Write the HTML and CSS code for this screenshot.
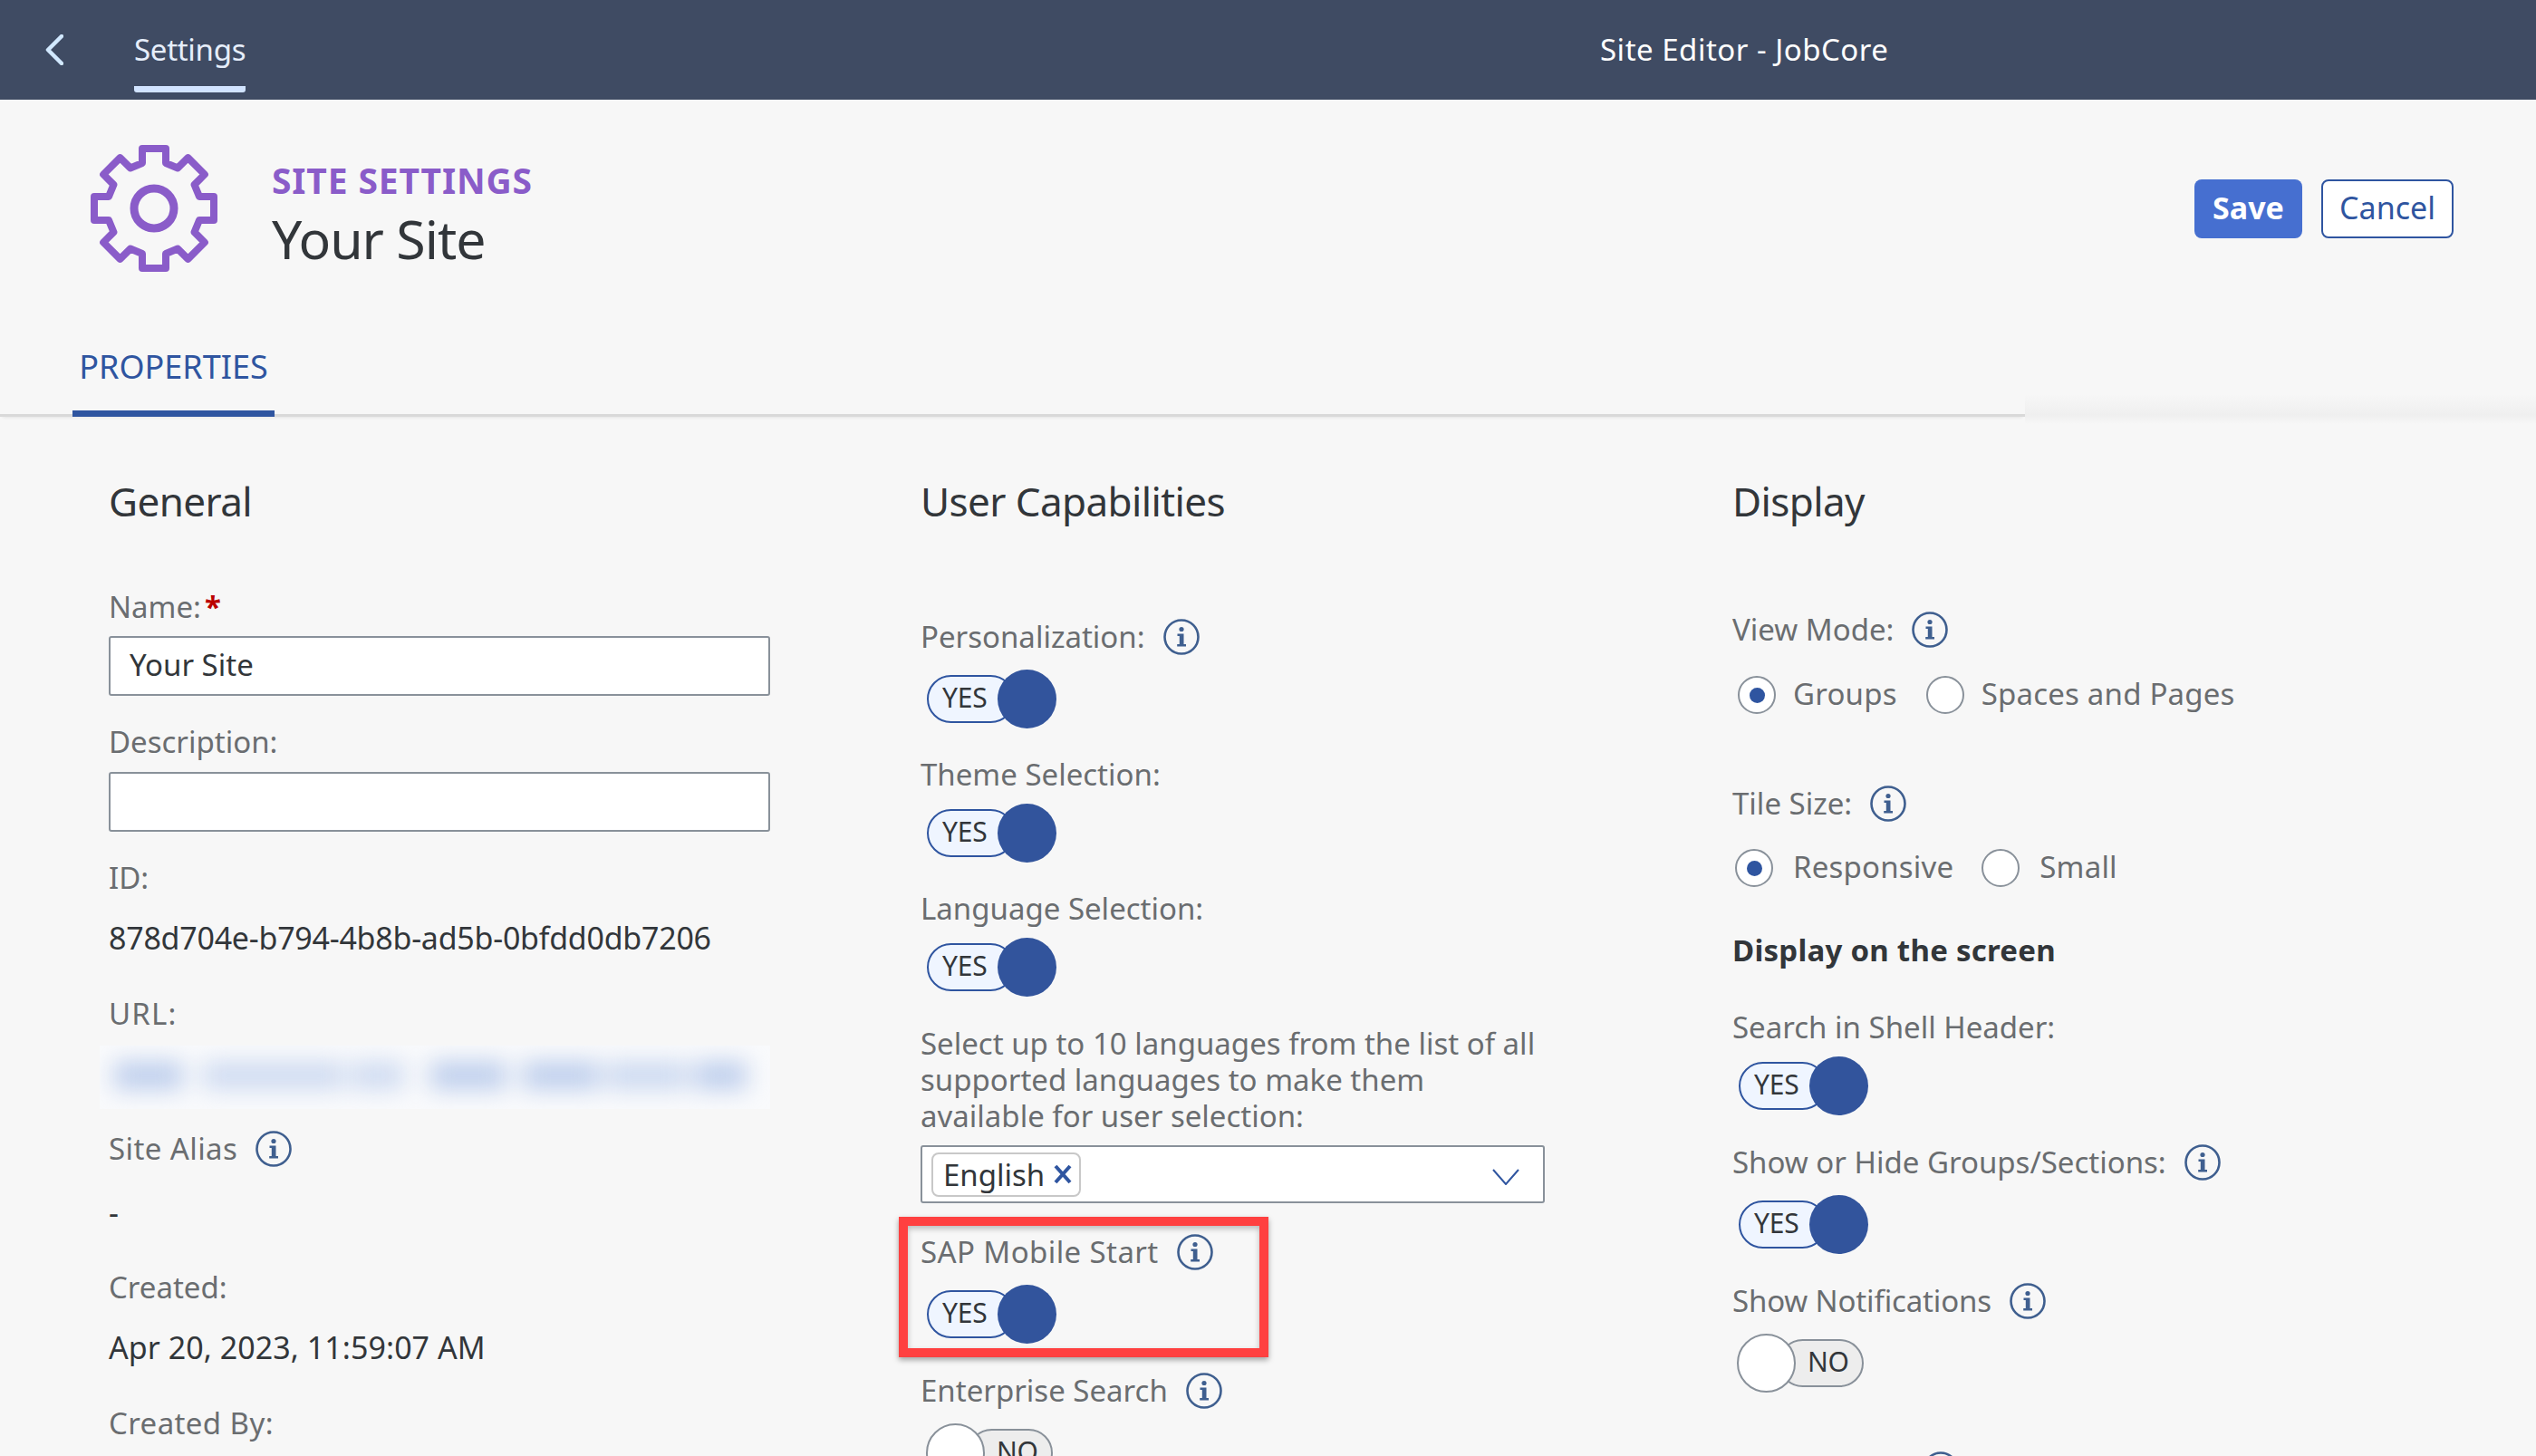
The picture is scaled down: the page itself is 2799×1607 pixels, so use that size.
FILE: index.html
```html
<!DOCTYPE html>
<html lang="en">
<head>
<meta charset="utf-8">
<title>Site Editor - JobCore</title>
<link rel="stylesheet" href="styles.css">
</head>
<body>
<svg class="defs" width="0" height="0" aria-hidden="true">
  <symbol id="info" viewBox="0 0 40 40">
    <circle cx="20" cy="20" r="18.5" fill="none" stroke="#3f5f8f" stroke-width="2.6"/>
    <circle cx="20" cy="11.5" r="2.6" fill="#3f5f8f"/>
    <path d="M15.5 16.5h7v11.5h2.5v2.6H15.2V28h2.6v-8.9h-2.3z" fill="#3f5f8f"/>
  </symbol>
</svg>

<header class="shell">
  <svg class="back" viewBox="0 0 20 34"><path d="M18 2 3 17l15 15" fill="none" stroke="#d1e8ff" stroke-width="4.5" stroke-linecap="round" stroke-linejoin="round"/></svg>
  <div class="shell-tab">Settings</div>
  <div class="shell-title">Site Editor - JobCore</div>
</header>

<section class="page-head">
  <svg class="gear" viewBox="-70 -70 140 140">
    <polygon points="-13,-50 -13,-66 13,-66 13,-50 26.16,-44.55 37.48,-55.86 55.86,-37.48 44.55,-26.16 50,-13 66,-13 66,13 50,13 44.55,26.16 55.86,37.48 37.48,55.86 26.16,44.55 13,50 13,66 -13,66 -13,50 -26.16,44.55 -37.48,55.86 -55.86,37.48 -44.55,26.16 -50,13 -66,13 -66,-13 -50,-13 -44.55,-26.16 -55.86,-37.48 -37.48,-55.86 -26.16,-44.55" fill="none" stroke="#8a5cc9" stroke-width="8" stroke-linejoin="round"/>
    <circle r="22" fill="none" stroke="#8a5cc9" stroke-width="9"/>
  </svg>
  <div class="head-text">
    <div class="eyebrow">SITE SETTINGS</div>
    <h1 class="site-name">Your Site</h1>
  </div>
  <div class="actions">
    <button class="btn btn-primary">Save</button>
    <button class="btn btn-ghost">Cancel</button>
  </div>
</section>

<nav class="tabs">
  <div class="tab-line"><div class="tab">PROPERTIES</div></div>
  <div class="tab-fade"></div>
</nav>

<main class="columns">
  <section class="col">
    <h2 class="col-title">General</h2>
    <div class="label m77">Name:<span class="req">*</span></div>
    <div class="input m12">Your Site</div>
    <div class="label m31">Description:</div>
    <div class="input m13"></div>
    <div class="label m31">ID:</div>
    <div class="value m26">878d704e-b794-4b8b-ad5b-0bfdd0db7206</div>
    <div class="label wider m44">URL:</div>
    <div class="blurred m15"><div class="blur-row"><i class="b1"></i><i class="b2"></i><i class="b3"></i><i class="b4"></i><i class="b5"></i><i class="b6"></i><i class="b7"></i></div></div>
    <div class="label wide m24">Site Alias<svg class="info"><use href="#info"/></svg></div>
    <div class="value m30">-</div>
    <div class="label m43">Created:</div>
    <div class="value date m26">Apr 20, 2023, 11:59:07 AM</div>
    <div class="label wide m44">Created By:</div>
  </section>

  <section class="col col-mid">
    <h2 class="col-title">User Capabilities</h2>
    <div class="label m110">Personalization:<svg class="info"><use href="#info"/></svg></div>
    <div class="toggle m16"><span class="track">YES</span><span class="knob"></span></div>
    <div class="label m31">Theme Selection:</div>
    <div class="toggle m12"><span class="track">YES</span><span class="knob"></span></div>
    <div class="label m31">Language Selection:</div>
    <div class="toggle m12"><span class="track">YES</span><span class="knob"></span></div>
    <p class="label hint m32">Select up to 10 languages from the list of all supported languages to make them available for user selection:</p>
    <div class="multi m12">
      <span class="token">English<svg class="token-x" viewBox="0 0 22 24"><path d="M3 3l16 18M19 3 3 21" fill="none" stroke="#2f55a0" stroke-width="4"/></svg></span>
      <svg class="caret" viewBox="0 0 30 18"><path d="M1 1l14 16L29 1" fill="none" stroke="#2f55a0" stroke-width="2"/></svg>
    </div>
    <div class="label wide m34">SAP Mobile Start<svg class="info"><use href="#info"/></svg></div>
    <div class="toggle m16"><span class="track">YES</span><span class="knob"></span></div>
    <div class="label m32">Enterprise Search<svg class="info"><use href="#info"/></svg></div>
    <div class="toggle off m16"><span class="knob"></span><span class="track">NO</span></div>
    <div class="highlight"></div>
  </section>

  <section class="col col-right">
    <h2 class="col-title">Display</h2>
    <div class="label m102">View Mode:<svg class="info"><use href="#info"/></svg></div>
    <div class="radios radios-a m31">
      <span class="radio on"></span><span class="radio-text">Groups</span>
      <span class="radio"></span><span class="radio-text">Spaces and Pages</span>
    </div>
    <div class="label m79">Tile Size:<svg class="info"><use href="#info"/></svg></div>
    <div class="radios radios-b m30">
      <span class="radio on"></span><span class="radio-text">Responsive</span>
      <span class="radio"></span><span class="radio-text">Small</span>
    </div>
    <div class="subhead m50">Display on the screen</div>
    <div class="label m45">Search in Shell Header:</div>
    <div class="toggle m12"><span class="track">YES</span><span class="knob"></span></div>
    <div class="label m32">Show or Hide Groups/Sections:<svg class="info"><use href="#info"/></svg></div>
    <div class="toggle m16"><span class="track">YES</span><span class="knob"></span></div>
    <div class="label tight m32">Show Notifications<svg class="info"><use href="#info"/></svg></div>
    <div class="toggle off m16"><span class="knob"></span><span class="track">NO</span></div>
    <div class="label m65 tail"><svg class="info"><use href="#info"/></svg></div>
  </section>
</main>
</body>
</html>
```

FILE: styles.css
```css
* { box-sizing: border-box; }
html, body { margin: 0; height: 100%; }
body {
  background: #f7f7f7;
  font-family: "Noto Sans", "Open Sans", sans-serif;
  font-size: 33px;
  color: #32363a;
  overflow: hidden;
}
.defs { position: absolute; }

.shell {
  height: 110px;
  background: #3f4b63;
  display: flex;
  align-items: stretch;
}
.back { width: 20px; height: 34px; margin: 38px 0 0 50px; }
.shell-tab {
  margin-left: 78px;
  width: 123px;
  height: 102px;
  line-height: 110px;
  font-size: 33px;
  letter-spacing: -.3px;
  color: #e6eefb;
  white-space: nowrap;
  border-bottom: 7px solid #d1e3ff;
  border-radius: 0 0 3px 3px;
}
.shell-title {
  margin-left: 1495px;
  line-height: 110px;
  font-size: 33px;
  letter-spacing: .5px;
  color: #fff;
  white-space: nowrap;
}

.page-head {
  height: 325px;
  padding: 50px 91px 0 100px;
  display: flex;
  align-items: flex-start;
}
.gear { width: 140px; height: 140px; flex: none; }
.head-text { margin-left: 60px; padding-top: 17px; }
.eyebrow {
  font-size: 39px;
  line-height: 44px;
  font-weight: 700;
  letter-spacing: .85px;
  color: #8a5cc9;
}
.site-name {
  margin: 6px 0 0;
  font-size: 59px;
  line-height: 72px;
  font-weight: 400;
  letter-spacing: -1px;
  color: #32363a;
}
.actions { margin: 38px 0 0 auto; display: flex; gap: 21px; }
.btn {
  height: 65px;
  border-radius: 8px;
  font: inherit;
  font-size: 34px;
  padding: 0 0 3px;
}
.btn-primary {
  width: 119px;
  border: 0;
  background: #466fd0;
  color: #fff;
  font-weight: 700;
}
.btn-ghost {
  width: 146px;
  border: 2px solid #2f55a0;
  background: #fff;
  color: #2f55a0;
}

.tabs { height: 25px; display: flex; margin-top: 0; }
.tab-line {
  width: 2235px;
  height: 25px;
  border-bottom: 3px solid #d9d9d9;
  box-shadow: 0 3px 4px -3px rgba(0,0,0,.12);
  position: relative;
}
.tab {
  position: absolute;
  left: 80px;
  bottom: -3px;
  width: 223px;
  height: 70px;
  text-align: center;
  line-height: 30px;
  font-size: 36px;
  color: #2f55a0;
  border-bottom: 7px solid #2f55a0;
  white-space: nowrap;
}
.tab-fade {
  flex: 1;
  height: 33px;
  background: linear-gradient(#f7f7f7, #efefef 70%, #f7f7f7);
}

.columns {
  padding: 73px 0 0 120px;
  display: grid;
  grid-template-columns: 896px 896px 1fr;
}
.col { position: relative; }
.col-title {
  margin: 0;
  font-size: 44px;
  line-height: 40px;
  font-weight: 400;
  letter-spacing: -.6px;
  color: #32363a;
}
.label {
  display: flex;
  align-items: center;
  line-height: 40px;
  min-height: 40px;
  font-size: 33px;
  color: #6a6d70;
  white-space: nowrap;
}
.wide { letter-spacing: .4px; }
.wider { letter-spacing: 1.2px; }
.tight { letter-spacing: -.15px; }
.hint {
  display: block;
  width: 684px;
  white-space: normal;
  margin-bottom: 0;
}
.req { color: #b00; font-weight: 700; margin-left: 4px; }
.info { width: 40px; height: 40px; margin-left: 20px; flex: none; }
.value { line-height: 40px; font-size: 34px; letter-spacing: -.25px; color: #32363a; white-space: nowrap; }
.date { letter-spacing: .05px; }
.input {
  width: 730px;
  height: 66px;
  background: #fff;
  border: 2px solid #89919a;
  border-radius: 3px;
  padding-left: 21px;
  line-height: 60px;
  font-size: 33px;
}
.blurred {
  width: 740px;
  height: 70px;
  margin-left: -10px;
  background: #f9fafc;
  overflow: hidden;
  display: flex;
  align-items: center;
  padding-bottom: 4px;
}
.blur-row { filter: blur(13px); display: flex; height: 30px; }
.blur-row i { display: block; height: 30px; background: #bccdec; }
.b1 { width: 76px; margin-left: 16px; }
.b2 { width: 156px; margin-left: 22px; opacity: .7; }
.b3 { width: 58px; margin-left: 8px; opacity: .7; }
.b4 { width: 84px; margin-left: 29px; }
.b5 { width: 84px; margin-left: 18px; }
.b6 { width: 89px; margin-left: 8px; opacity: .75; }
.b7 { width: 58px; margin-left: 8px; }

.toggle { display: flex; align-items: center; width: 143px; height: 65px; margin-left: 7px; }
.track {
  width: 97px;
  height: 53px;
  flex: none;
  background: #eff5ff;
  border: 2px solid #2f55a0;
  border-radius: 27px;
  padding-left: 15px;
  line-height: 46px;
  font-size: 30px;
  letter-spacing: -.2px;
  color: #32363a;
}
.knob {
  width: 65px;
  height: 65px;
  flex: none;
  margin-left: -19px;
  border-radius: 50%;
  background: #32549c;
  position: relative;
}
.off { margin-left: 6px; }
.off .knob { margin-left: 0; background: #fff; border: 2px solid #89919a; }
.off .track {
  width: 94px;
  margin-left: -19px;
  padding-left: 30px;
  background: #ededed;
  border-color: #89919a;
}
.col-right .toggle { margin-left: 7px; }
.col-right .off { margin-left: 5px; }

.multi {
  width: 689px;
  height: 64px;
  background: #fff;
  border: 2px solid #89919a;
  border-radius: 3px;
  display: flex;
  align-items: center;
  justify-content: space-between;
  padding: 0 26px 0 10px;
}
.token {
  height: 49px;
  width: 165px;
  display: flex;
  align-items: center;
  padding-left: 11px;
  border: 2px solid #c8c8c8;
  border-radius: 8px;
  font-size: 33px;
  color: #32363a;
}
.token-x { width: 22px; height: 24px; margin-left: 9px; flex: none; }
.caret { width: 30px; height: 18px; margin-top: 6px; }

.highlight {
  position: absolute;
  left: -24px;
  top: 810px;
  width: 408px;
  height: 155px;
  border: 10px solid #ff4040;
  box-shadow: 0 3px 6px rgba(0,0,0,.35), inset 0 3px 6px rgba(0,0,0,.25);
  pointer-events: none;
}

.radios { display: flex; align-items: center; height: 42px; }
.radio {
  width: 42px;
  height: 42px;
  flex: none;
  border: 2px solid #89919a;
  border-radius: 50%;
  background: #fff;
  display: flex;
  align-items: center;
  justify-content: center;
}
.radio.on::after {
  content: "";
  width: 17px;
  height: 17px;
  border-radius: 50%;
  background: #2f55a0;
}
.radio-text { font-size: 33px; letter-spacing: .2px; color: #6a6d70; white-space: nowrap; margin-top: -3px; }
.radios-a { padding-left: 6px; }
.radios-a .radio-text { margin-left: 19px; }
.radios-a .radio:nth-child(3) { margin-left: 32px; }
.radios-b { padding-left: 3px; }
.radios-b .radio-text { margin-left: 22px; }
.radios-b .radio:nth-child(3) { margin-left: 31px; }
.subhead { line-height: 40px; font-size: 33px; font-weight: 700; letter-spacing: .25px; color: #32363a; }
.tail .info { margin-left: 210px; }

.m12 { margin-top: 12px; } .m13 { margin-top: 13px; }
.m15 { margin-top: 15px; } .m16 { margin-top: 16px; } .m24 { margin-top: 24px; }
.m26 { margin-top: 26px; }
.m30 { margin-top: 30px; } .m31 { margin-top: 31px; } .m32 { margin-top: 32px; }
.m34 { margin-top: 34px; } .m43 { margin-top: 43px; }
.m44 { margin-top: 44px; } .m45 { margin-top: 45px; } .m50 { margin-top: 50px; }
.m65 { margin-top: 65px; } .m77 { margin-top: 77px; } .m79 { margin-top: 79px; }
.m102 { margin-top: 102px; } .m110 { margin-top: 110px; }
```
